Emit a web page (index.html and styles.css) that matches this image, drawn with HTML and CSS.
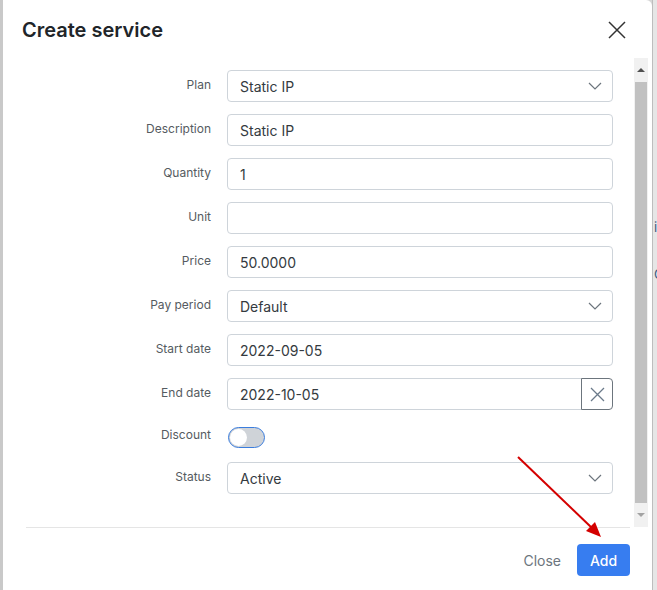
FILE: index.html
```html
<!DOCTYPE html>
<html>
<head>
<meta charset="utf-8">
<link rel="stylesheet" href="styles.css">
</head>
<body>
<div class="page">
  <div class="strip-left"></div>
  <div class="modal">
    <div class="header">
      <h1 class="title">Create service</h1>
      <svg class="close-x" width="18" height="18" viewBox="0 0 18 18"><path d="M1 1L17 17M17 1L1 17" stroke="#333" stroke-width="1.5" fill="none"/></svg>
    </div>
    <div class="body">
      <div class="content">
        <div class="form">
          <label class="lbl">Plan</label>
          <div class="field select"><span>Static IP</span><svg class="chev" width="14" height="8" viewBox="0 0 14 8"><path d="M1 1L7 7L13 1" stroke="#6c757d" stroke-width="1.2" fill="none"/></svg></div>

          <label class="lbl">Description</label>
          <div class="field"><span>Static IP</span></div>

          <label class="lbl">Quantity</label>
          <div class="field"><span>1</span></div>

          <label class="lbl">Unit</label>
          <div class="field"><span></span></div>

          <label class="lbl">Price</label>
          <div class="field"><span>50.0000</span></div>

          <label class="lbl">Pay period</label>
          <div class="field select"><span>Default</span><svg class="chev" width="14" height="8" viewBox="0 0 14 8"><path d="M1 1L7 7L13 1" stroke="#6c757d" stroke-width="1.2" fill="none"/></svg></div>

          <label class="lbl">Start date</label>
          <div class="field"><span>2022-09-05</span></div>

          <label class="lbl">End date</label>
          <div class="group">
            <div class="field grow"><span>2022-10-05</span></div>
            <div class="clear-btn"><svg width="15" height="15" viewBox="0 0 15 15"><path d="M1 1L14 14M14 1L1 14" stroke="#6a7a8a" stroke-width="1.3" fill="none"/></svg></div>
          </div>

          <label class="lbl lbl-short">Discount</label>
          <div class="toggle-row"><div class="toggle"><div class="knob"></div></div></div>

          <label class="lbl">Status</label>
          <div class="field select"><span>Active</span><svg class="chev" width="14" height="8" viewBox="0 0 14 8"><path d="M1 1L7 7L13 1" stroke="#6c757d" stroke-width="1.2" fill="none"/></svg></div>
        </div>
      </div>
      <div class="scrollbar">
        <div class="sb-btn"><div class="tri-up"></div></div>
        <div class="sb-thumb"></div>
        <div class="sb-btn"><div class="tri-down"></div></div>
      </div>
    </div>
    <div class="footer">
      <button class="btn-close">Close</button>
      <button class="btn-add">Add</button>
    </div>
  </div>
  <div class="strip-right">
    <div class="peek p1">ic</div>
    <div class="peek p2">O</div>
  </div>
  <svg class="arrow" width="657" height="590" viewBox="0 0 657 590">
    <line x1="518" y1="457" x2="592" y2="528" stroke="#d40000" stroke-width="2"/>
    <path d="M601 537L586 531L595 522Z" fill="#d40000"/>
  </svg>
</div>
</body>
</html>
```

FILE: styles.css
```css
* { box-sizing: border-box; }
html, body { margin: 0; padding: 0; }
body {
  width: 657px;
  height: 590px;
  overflow: hidden;
  background: #d6d6d6;
  font-family: Inter, "Noto Sans", sans-serif;
}
.page {
  position: relative;
  display: flex;
  width: 657px;
  height: 590px;
}
.strip-left {
  width: 3px;
  background: #c9c9c9;
}
.modal {
  width: 649px;
  height: 590px;
  background: #fff;
  border-radius: 0 6px 0 0;
  display: flex;
  flex-direction: column;
}
.header {
  height: 58px;
  display: flex;
  align-items: flex-start;
  justify-content: space-between;
  padding: 18px 26px 0 19px;
}
.title {
  margin: 0;
  font-size: 20px;
  font-weight: 600;
  color: #212529;
  line-height: 24px;
}
.close-x { margin-top: 3px; }
.body {
  height: 469px;
  display: flex;
}
.content {
  width: 631px;
  padding: 12px 21px 0 0;
}
.form {
  display: grid;
  grid-template-columns: 208px 386px;
  column-gap: 16px;
  row-gap: 12px;
}
.lbl {
  font-size: 12px;
  color: #555b61;
  text-align: right;
  align-self: center;
  margin-top: -4px;
}
.field {
  height: 32px;
  border: 1px solid #ced4da;
  border-radius: 4px;
  display: flex;
  align-items: center;
  justify-content: space-between;
  padding: 0 10px 0 12px;
  font-size: 14px;
  color: #343a40;
}
.group { display: flex; }
.grow { flex: 1; border-radius: 4px 0 0 4px; }
.clear-btn {
  width: 32px;
  height: 32px;
  border: 1px solid #6c757d;
  border-radius: 0 4px 4px 0;
  margin-left: -1px;
  display: flex;
  align-items: center;
  justify-content: center;
}
.toggle-row {
  height: 28px;
  display: flex;
  align-items: center;
}
.toggle {
  width: 37px;
  height: 21px;
  margin-left: 1px;
  margin-top: 2px;
  border: 1px solid #3b7ddd;
  border-radius: 11px;
  background: #cfd3d8;
  padding: 1px;
}
.knob {
  width: 17px;
  height: 17px;
  border-radius: 50%;
  background: #fff;
}
.scrollbar {
  width: 14px;
  background: #f1f1f1;
  display: flex;
  flex-direction: column;
}
.sb-btn {
  height: 24px;
  display: flex;
  align-items: center;
  justify-content: center;
}
.sb-thumb {
  flex: 1;
  background: #c1c1c1;
  margin: 0 1px;
}
.tri-up {
  width: 0; height: 0;
  border-left: 4px solid transparent;
  border-right: 4px solid transparent;
  border-bottom: 4px solid #505050;
}
.tri-down {
  width: 0; height: 0;
  border-left: 4px solid transparent;
  border-right: 4px solid transparent;
  border-top: 4px solid #a3a3a3;
}
.footer {
  margin: 0 22px 0 23px;
  border-top: 1px solid #e5e5e5;
  padding-top: 16px;
  display: flex;
  justify-content: flex-end;
  align-items: center;
  gap: 16px;
}
.btn-close {
  border: none;
  background: none;
  font-family: inherit;
  font-size: 14px;
  color: #6c757d;
  padding: 0;
}
.btn-add {
  width: 53px;
  height: 32px;
  border: none;
  border-radius: 4px;
  background: #377df0;
  color: #fff;
  font-family: inherit;
  font-size: 14px;
  font-weight: 500;
}
.strip-right {
  width: 5px;
  background: #e6e6e6;
  border-left: 1px solid #bdbdbd;
  position: relative;
  overflow: hidden;
}
.peek {
  position: absolute;
  left: 1px;
  font-size: 13px;
  color: #3a5a80;
}
.p1 { top: 219px; }
.p2 { top: 266px; }
.arrow {
  position: absolute;
  left: 0;
  top: 0;
  pointer-events: none;
}
```
